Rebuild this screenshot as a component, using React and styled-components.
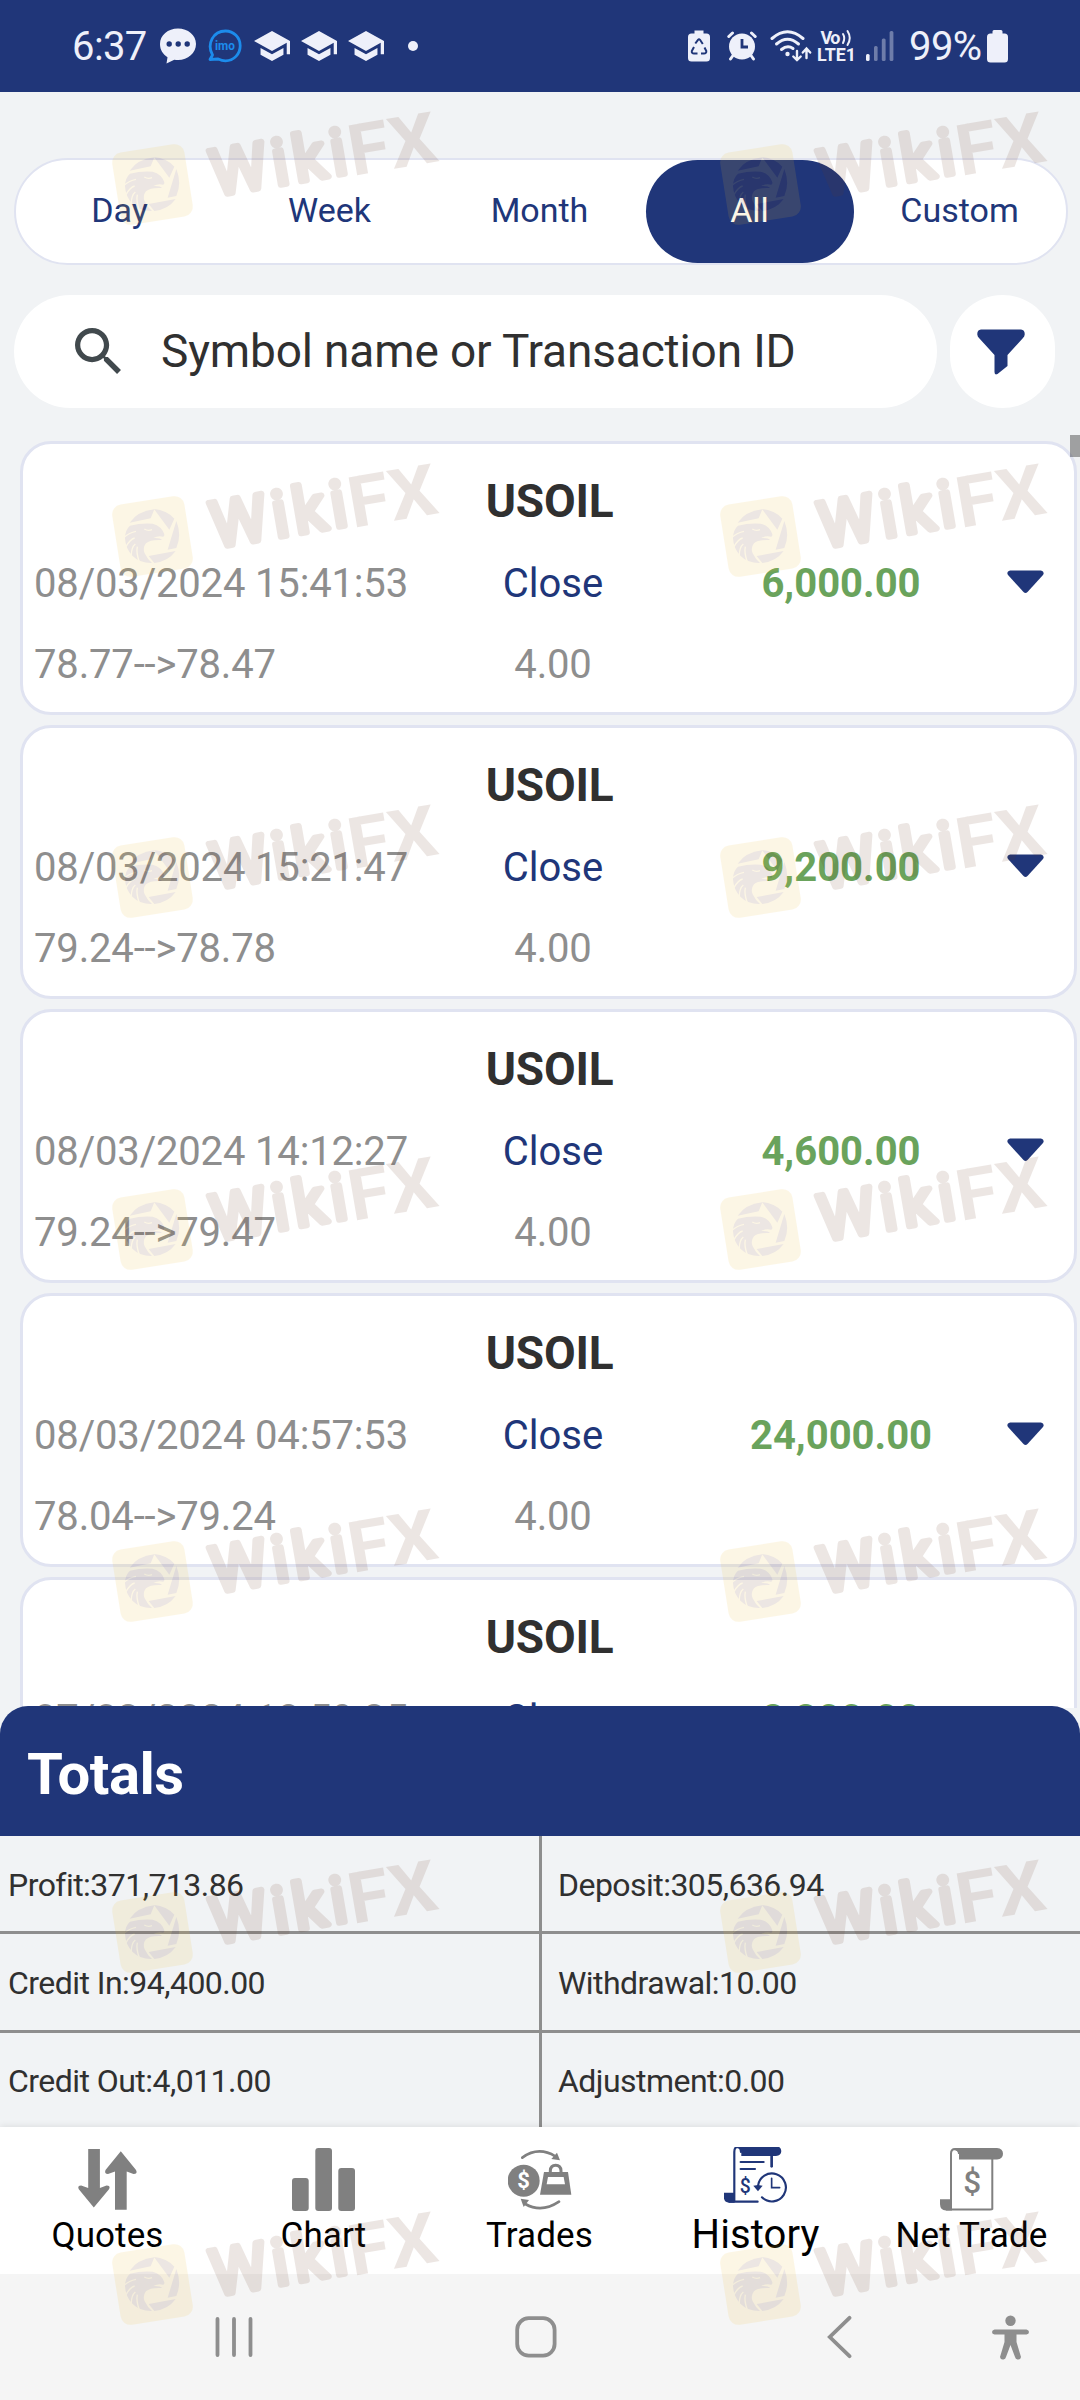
import React from 'react'
import styled, { createGlobalStyle, ThemeProvider } from 'styled-components'

const theme = {
  color: {
    primary: '#203679',
    page: '#f1f3f5',
    border: '#e0e3f1',
    text: '#303030',
    muted: '#8e8e8e',
    profit: '#6aa35c',
    icon: '#808080',
    status: '#eef0fa'
  }
}

const periods = ['Day', 'Week', 'Month', 'All', 'Custom']

const deals = [
  { id: 1, time: '08/03/2024 15:41:53', price: '78.77-->78.47', amount: '6,000.00' },
  { id: 2, time: '08/03/2024 15:21:47', price: '79.24-->78.78', amount: '9,200.00' },
  { id: 3, time: '08/03/2024 14:12:27', price: '79.24-->79.47', amount: '4,600.00' },
  { id: 4, time: '08/03/2024 04:57:53', price: '78.04-->79.24', amount: '24,000.00' },
  { id: 5, time: '07/03/2024 18:59:35', price: '78.80-->78.04', amount: '8,800.00' }
]

const totals = [
  'Profit:371,713.86',
  'Deposit:305,636.94',
  'Credit In:94,400.00',
  'Withdrawal:10.00',
  'Credit Out:4,011.00',
  'Adjustment:0.00'
]

const watermarkRows = [184.5, 536, 877.5, 1229.5, 1581, 1932.5, 2284]
const watermarkColumns = [100, 708]

/* Status bar icons */

const ChatIcon = () => (
  <svg width="36" height="36" viewBox="0 0 36 36">
    <path d="M18 0.5C28 0.5 36 7.200 36 16S28 32 18 32C16.800 32 15.500 31.900 14.300 31.700L6.500 35.500L7.500 29.200C3 26.500 0 21.800 0 16C0 7.200 8 0.500 18 0.500Z" fill="#eef0fa" />
    <g fill="#203679">
      <circle cx="9.200" cy="16" r="2.700" />
      <circle cx="18.200" cy="16" r="2.700" />
      <circle cx="27.200" cy="16" r="2.700" />
    </g>
  </svg>
)

const ImoIcon = () => (
  <svg width="34" height="34" viewBox="0 0 34 34">
    <path d="M4.500 26C-1.500 15 5 2 17.500 2C25.800 2 32.200 8.500 32.200 16.700C32.200 25 25.800 31.800 17.500 31.800C14.800 31.800 12.300 31 10.200 30L2 30.500Z" fill="none" stroke="#1c8cec" strokeWidth="2.800" strokeLinejoin="round" />
    <text x="17" y="21" textAnchor="middle" fontFamily="Roboto, sans-serif" fontWeight="700" fontSize="12.500" textLength="20" lengthAdjust="spacingAndGlyphs" fill="#1c8cec">imo</text>
  </svg>
)

const CapIcon = () => (
  <svg width="36" height="30" viewBox="1 3 22 18" preserveAspectRatio="none">
    <path d="M5 13.18v4L12 21l7-3.820v-4L12 17l-7-3.820zM12 3L1 9l11 6 9-4.910V17h2V9L12 3z" fill="#eef0fa" />
  </svg>
)

const RecycleBatteryIcon = () => (
  <svg width="22" height="32" viewBox="0 0 22 32">
    <path d="M6.500 0.500H15.500V3.500H18.500Q22 3.500 22 7V28Q22 31.500 18.500 31.500H3.500Q0 31.500 0 28V7Q0 3.500 3.500 3.500H6.500Z" fill="#eef0fa" />
    <g fill="none" stroke="#203679" strokeWidth="2">
      <path d="M7.300 13.500L10 9.800Q11 8.700 12 9.800L14.800 14" />
      <path d="M16.500 17.500L18.300 21Q18.500 23.500 16 23.500H13" />
      <path d="M9.500 23.500H6Q3.500 23.500 3.800 21L6 17" />
    </g>
  </svg>
)

const AlarmIcon = () => (
  <svg width="30" height="30" viewBox="0 0 30 30">
    <g stroke="#eef0fa" strokeWidth="3" strokeLinecap="round">
      <path d="M1.800 5.500L5.500 2" />
      <path d="M28.200 5.500L24.500 2" />
      <path d="M6 24.500L3.500 28" />
      <path d="M24 24.500L26.500 28" />
    </g>
    <circle cx="15" cy="15.500" r="13" fill="#eef0fa" />
    <path d="M15 8V16H21" fill="none" stroke="#203679" strokeWidth="2.800" />
  </svg>
)

const WifiIcon = () => (
  <svg width="42" height="32" viewBox="0 0 42 32" fill="none" stroke="#eef0fa" strokeLinecap="round">
    <g strokeWidth="3">
      <path d="M2 8.500Q17.500 -5 33 8.500" />
      <path d="M6.500 14Q17.500 4.500 28.500 14" />
      <path d="M11.500 19.500Q17.500 14.500 23 18.500" />
    </g>
    <circle cx="17.500" cy="24" r="2.200" fill="#eef0fa" stroke="none" />
    <g strokeWidth="2.400">
      <path d="M27 21V30M23.300 26.500L27 30L30.700 26.500" />
      <path d="M36.500 28V19M32.800 22.500L36.500 18.500L40.200 22.500" />
    </g>
  </svg>
)

const VolteIcon = () => (
  <svg width="38" height="34" viewBox="0 0 38 34" overflow="visible" fontFamily="Roboto, sans-serif" fontWeight="700" fill="#eef0fa">
    <text x="3.500" y="15" fontSize="18" textLength="20">Vo</text>
    <g fill="none" stroke="#eef0fa" strokeWidth="2" strokeLinecap="round">
      <path d="M26 5Q28.500 9 26 14" />
      <path d="M30.500 2Q35 9 30.500 16" />
    </g>
    <text x="0" y="32" fontSize="18.500" textLength="39" lengthAdjust="spacingAndGlyphs">LTE1</text>
  </svg>
)

const SignalIcon = () => (
  <svg width="28" height="30" viewBox="0 0 28 30" fill="#eef0fa">
    <rect x="0" y="23" width="3.600" height="7" rx="1.500" />
    <g opacity="0.380">
      <rect x="8" y="15" width="3.600" height="15" rx="1.500" />
      <rect x="15.800" y="7.500" width="3.800" height="22.500" rx="1.500" />
      <rect x="23.600" y="0" width="3.800" height="30" rx="1.500" />
    </g>
  </svg>
)

const BatteryIcon = () => (
  <svg width="21" height="33" viewBox="0 0 21 33">
    <path d="M5.500 1.500Q5.500 0 7 0H14Q15.500 0 15.500 1.500V3.500H17.500Q21 3.500 21 7V29Q21 32.500 17.500 32.500H3.500Q0 32.500 0 29V7Q0 3.500 3.500 3.500H5.500Z" fill="#eef0fa" />
  </svg>
)

/* Toolbar icons */

const SearchIcon = () => (
  <svg width="46" height="46" viewBox="3 3 17.500 17.500">
    <path d="M15.500 14h-.79l-.28-.27C15.410 12.590 16 11.110 16 9.500 16 5.910 13.090 3 9.500 3S3 5.910 3 9.500 5.910 16 9.500 16c1.610 0 3.090-.59 4.230-1.570l.27.28v.79l5 4.990L20.490 19l-4.990-5zm-6 0C7.010 14 5 11.990 5 9.500S7.010 5 9.500 5 14 7.010 14 9.500 11.990 14 9.500 14z" fill="#41494d" />
  </svg>
)

const FilterIcon = () => (
  <svg width="48" height="46" viewBox="0 0 48 46">
    <path d="M4 0.500H44Q48 1 47.700 5.500Q47.500 7.500 46 9L30.500 26V37L20.500 45Q17.500 46.500 17.500 43V26L2 9Q0.500 7.500 0.300 5.500Q0 1 4 0.500Z" fill="#203679" />
  </svg>
)

const ArrowDown = () => (
  <svg width="37" height="24" viewBox="0 0 37 24">
    <path d="M3 0.500H34Q38 1.500 36 5L20.500 22Q18.500 24 16.500 22L1 5Q-1 1.500 3 0.500Z" fill="#203679" />
  </svg>
)

/* Tab icons */

const QuotesIcon = () => (
  <svg width="64" height="64" viewBox="0 0 64 64" fill="#808080">
    <path d="M12.200 2H23.900V41L30.500 38.500Q35 38.500 33 42.300L17.800 60.500L2.800 42.300Q1 38.500 5.200 38.500L12.200 41Z" />
    <path d="M39 62.700H50.700V24.500L57.500 27Q62 27 60 23L44.800 4.300L29.500 23Q28 27 32 27L39 24.500Z" />
  </svg>
)

const ChartIcon = () => (
  <svg width="64" height="64" viewBox="0 0 64 64" fill="#808080">
    <rect x="0" y="31" width="16.700" height="33" rx="3" />
    <rect x="23.300" y="1" width="16.700" height="63" rx="3" />
    <rect x="46.300" y="21" width="16.700" height="43" rx="3" />
  </svg>
)

const TradesIcon = () => (
  <svg width="64" height="64" viewBox="0 0 64 64" fill="#808080">
    <g transform="translate(-18 -17) scale(0.3333)">
      <g fill="none" stroke="#808080" strokeWidth="8" strokeLinecap="round">
        <path d="M97 83Q145 48 196 79" />
        <path d="M207 215Q155 250 106 222" />
        <path d="M181 128V122Q182 106 197 106T213 122V128" strokeWidth="9" />
      </g>
      <path d="M201 68L210 91L184 87Z" />
      <path d="M92 206L117 210L101 231Z" />
      <circle cx="101" cy="152" r="48" />
      <path d="M162 126H234L244 194H150Z" />
      <path d="M174 141H221L225 163H170Z" fill="#fff" />
      <text x="101" y="175" textAnchor="middle" fontFamily="Roboto, sans-serif" fontWeight="700" fontSize="66" fill="#fff">$</text>
    </g>
  </svg>
)

const HistoryIcon = () => (
  <svg width="64" height="64" viewBox="0 0 64 64" fill="#203679">
    <g transform="translate(-234 -17) scale(0.3333)">
      <path d="M744 48H858Q874 50 874 63T858 78H754V66Q752 56 744 53Z" />
      <path d="M702 188H733V218H718Q702 217 702 203Z" />
      <g fill="none" stroke="#203679" strokeWidth="6.500" strokeLinecap="round">
        <path d="M733 214V66Q733 51 743 51Q753 53 753 66" />
        <path d="M718 215H803" />
        <path d="M845 78V109" strokeWidth="8" />
        <path d="M752 96H821" />
        <path d="M752 117H795" />
        <path d="M804 168A42 42 0 1 1 816 202" />
        <path d="M845 145V173H869" strokeWidth="5" />
      </g>
      <path d="M790 167L804 165L818 167L804 184Z" />
      <text x="766" y="188" textAnchor="middle" fontFamily="Roboto, sans-serif" fontWeight="500" fontSize="58">$</text>
    </g>
  </svg>
)

const NetTradeIcon = () => (
  <svg width="64" height="64" viewBox="0 0 64 64" fill="#808080">
    <path d="M15 1H57Q63 1.500 63 6.700T57 12.500H19V7Q18.500 4 15 3Z" />
    <path d="M0 52.300H12V63.500H6Q0 63 0 57Z" />
    <g fill="none" stroke="#808080" strokeWidth="2">
      <path d="M11 62V6.500Q11 2 15 2Q19 2.500 19 7" />
      <path d="M52.300 12V62Q52 62.500 50 62.500H6" />
    </g>
    <text x="32.200" y="46.300" textAnchor="middle" fontFamily="Roboto, sans-serif" fontWeight="500" fontSize="31.500">$</text>
  </svg>
)

const tabs = [
  { label: 'Quotes', Icon: QuotesIcon },
  { label: 'Chart', Icon: ChartIcon },
  { label: 'Trades', Icon: TradesIcon },
  { label: 'History', Icon: HistoryIcon, active: true },
  { label: 'Net Trade', Icon: NetTradeIcon }
]

/* Android navigation keys */

const RecentsIcon = () => (
  <svg width="38" height="44" viewBox="0 0 38 44" stroke="#8e8e8e" strokeWidth="3.800" strokeLinecap="round">
    <path d="M2.500 4V40M19 4V40M35.500 4V40" />
  </svg>
)

const HomeIcon = () => (
  <svg width="42" height="44" viewBox="0 0 42 44">
    <rect x="2.200" y="3.200" width="37.400" height="37.400" rx="11.500" fill="none" stroke="#8e8e8e" strokeWidth="3.800" />
  </svg>
)

const BackIcon = () => (
  <svg width="25" height="44" viewBox="0 0 25 44">
    <path d="M22.500 2.800L2.800 22L22.500 41.200" fill="none" stroke="#8e8e8e" strokeWidth="3.800" strokeLinecap="round" />
  </svg>
)

const AccessibilityIcon = () => (
  <svg width="37" height="46" viewBox="0 0 37 46" fill="#8e8e8e">
    <circle cx="18.500" cy="6.800" r="5.200" />
    <path d="M2.500 15.500H34.500Q37 16 37 18T34.500 20.500H24.500V28L29 43Q28.500 46 25.500 45.500Q23.500 45 23 43L18.500 31L14 43Q13.500 45 11.500 45.500Q8.500 46 8 43L12.500 28V20.500H2.500Q0 20 0 18T2.500 15.500Z" />
  </svg>
)

const Watermark = ({ x, y }) => (
  <Mark $x={x} $y={y} width="350" height="150" viewBox="0 0 350 150">
    <rect x="16" y="50" width="73" height="73" rx="10" transform="rotate(-9 52.400 86.500)" fill="#eebc2f" />
    <g transform="scale(0.3333)" fill="#693720">
      <path d="M89 218Q112 184 163 178L152 205Z" />
      <path d="M162 177Q200 180 223 206L208 239Z" />
      <path d="M229 213Q246 255 229 294L203 299Z" />
      <path d="M227 303Q205 334 163 339L146 318Z" />
      <path d="M75 265Q75 240 90 227Q125 218 158 221Q185 228 193 253Q194 260 189 260Q175 256 160 264Q182 263 186 270Q150 268 138 280Q127 294 134 310Q142 327 156 339Q120 340 98 318Q77 298 75 265Z" />
      <g fill="none" stroke="#eebc2f" strokeWidth="4">
        <path d="M72 262Q88 248 108 244" />
        <path d="M78 290Q90 268 104 264" />
        <path d="M94 316Q94 292 106 282" />
        <path d="M118 336Q108 308 112 290" />
        <path d="M133 237Q144 244 156 239" />
      </g>
    </g>
    <g fill="#693720">
      <text transform="translate(114.500 98) rotate(-9.700)" fontFamily="Roboto, sans-serif" fontSize="64" textLength="137" stroke="#693720" strokeWidth="6" strokeLinejoin="round">Wiki</text>
      <text transform="translate(252.500 78) rotate(-9.700)" fontFamily="Roboto, sans-serif" fontWeight="700" fontSize="71" textLength="89" lengthAdjust="spacingAndGlyphs">FX</text>
    </g>
  </Mark>
)

const DealCard = ({ deal }) => (
  <Card>
    <Symbol>USOIL</Symbol>
    <CardRow>
      <Muted>{deal.time}</Muted>
      <Action>Close</Action>
      <Amount>{deal.amount}</Amount>
      <Expand><ArrowDown /></Expand>
    </CardRow>
    <CardRow>
      <Muted>{deal.price}</Muted>
      <Volume>4.00</Volume>
    </CardRow>
  </Card>
)

const App = () => {
  return (
    <ThemeProvider theme={theme}>
      <GlobalStyle />
      <Screen>
        <StatusBar>
          <Clock>6:37</Clock>
          <Notifications>
            <ChatIcon />
            <ImoIcon />
            <CapIcon />
            <CapIcon />
            <CapIcon />
          </Notifications>
          <MoreDot />
          <Indicators>
            <RecycleBatteryIcon />
            <AlarmIcon />
            <WifiIcon />
            <VolteIcon />
            <SignalIcon />
          </Indicators>
          <Percent>99%</Percent>
          <BatteryIcon />
        </StatusBar>

        <Periods>
          {periods.map(period => (
            <Period key={period} $active={period === 'All'}>{period}</Period>
          ))}
        </Periods>

        <Toolbar>
          <SearchBox>
            <SearchIcon />
            <Placeholder>Symbol name or Transaction ID</Placeholder>
          </SearchBox>
          <FilterButton><FilterIcon /></FilterButton>
        </Toolbar>

        <List>
          {deals.map(deal => (
            <DealCard key={deal.id} deal={deal} />
          ))}
          <ScrollThumb />
        </List>

        <TotalsHeader>Totals</TotalsHeader>
        <TotalsGrid>
          {totals.map(total => (
            <Total key={total}>{total}</Total>
          ))}
        </TotalsGrid>

        <TabBar>
          {tabs.map(({ label, Icon, active }) => (
            <Tab key={label}>
              <Icon />
              <TabLabel $active={active}>{label}</TabLabel>
            </Tab>
          ))}
        </TabBar>

        <SystemBar>
          <RecentsIcon />
          <HomeIcon />
          <BackIcon />
          <AccessibilityIcon />
        </SystemBar>

        {watermarkRows.map(y =>
          watermarkColumns.map(x => <Watermark key={`${x}-${y}`} x={x} y={y} />)
        )}
      </Screen>
    </ThemeProvider>
  )
}

const GlobalStyle = createGlobalStyle`
  * {
    box-sizing: border-box;
  }
  body {
    margin: 0;
    font-family: Roboto, sans-serif;
    background: #f1f3f5;
  }
  svg {
    display: block;
    flex-shrink: 0;
  }
`

const Screen = styled.div`
  position: relative;
  display: flex;
  flex-direction: column;
  width: 1080px;
  height: 2400px;
  overflow: hidden;
  background: ${({ theme }) => theme.color.page};
  white-space: nowrap;
`

const StatusBar = styled.header`
  display: flex;
  align-items: center;
  flex-shrink: 0;
  height: 92px;
  padding: 0 72px 0 72px;
  background: ${({ theme }) => theme.color.primary};
  color: ${({ theme }) => theme.color.status};
`

const Clock = styled.div`
  width: 88px;
  font-size: 40px;
  letter-spacing: -0.6px;
`

const Notifications = styled.div`
  display: flex;
  align-items: center;
  gap: 12px;

  svg:nth-child(n + 4) {
    margin-left: -1px;
  }
`

const MoreDot = styled.div`
  width: 10px;
  height: 10px;
  margin-left: 24px;
  border-radius: 50%;
  background: ${({ theme }) => theme.color.status};
`

const Indicators = styled.div`
  display: flex;
  align-items: center;
  gap: 11px;
  margin-left: auto;
  padding-right: 15px;

  svg:first-child {
    margin-right: 6px;
  }
  svg:nth-child(3) {
    margin: 0 -6px 0 2px;
  }
`

const Percent = styled.div`
  width: 78px;
  font-size: 40px;
  letter-spacing: -0.6px;
`

const Periods = styled.nav`
  display: grid;
  grid-template-columns: repeat(5, 208px);
  gap: 2px;
  flex-shrink: 0;
  width: 1054px;
  height: 107px;
  margin: 66px 0 0 14px;
  border: 2px solid ${({ theme }) => theme.color.border};
  border-radius: 54px;
  background: #fff;
`

const Period = styled.div`
  display: flex;
  align-items: center;
  justify-content: center;
  padding: 0 1px 3px 0;
  border-radius: 52px;
  font-size: 34px;
  background: ${({ theme, $active }) => ($active ? theme.color.primary : 'transparent')};
  color: ${({ theme, $active }) => ($active ? '#fff' : theme.color.primary)};
`

const Toolbar = styled.div`
  display: flex;
  gap: 13px;
  flex-shrink: 0;
  height: 113px;
  margin: 30px 25px 0 14px;
`

const SearchBox = styled.div`
  flex: 1;
  display: flex;
  align-items: center;
  padding: 0 0 2px 61px;
  border-radius: 57px;
  background: #fff;
`

const Placeholder = styled.div`
  margin-left: 40px;
  font-size: 46px;
  letter-spacing: -0.14px;
  color: ${({ theme }) => theme.color.text};
`

const FilterButton = styled.div`
  display: flex;
  align-items: center;
  justify-content: center;
  width: 105px;
  padding-right: 3px;
  border-radius: 53px;
  background: #fff;
`

const List = styled.main`
  position: relative;
  display: flex;
  flex-direction: column;
  gap: 10px;
  flex-shrink: 0;
  height: 1273px;
  padding: 6px 3px 0 20px;
  margin-top: 27px;
  overflow: hidden;
`

const ScrollThumb = styled.div`
  position: absolute;
  top: 0;
  right: 0;
  width: 10px;
  height: 22px;
  background: rgba(0, 0, 0, 0.34);
`

const Card = styled.div`
  flex-shrink: 0;
  height: 274px;
  padding: 16px 9px 0 11px;
  border: 3px solid ${({ theme }) => theme.color.border};
  border-radius: 31px;
  background: #fff;
  font-size: 40px;
`

const Symbol = styled.div`
  line-height: 82px;
  font-size: 46px;
  font-weight: 700;
  letter-spacing: -0.2px;
  text-align: center;
  color: ${({ theme }) => theme.color.text};
`

const CardRow = styled.div`
  display: grid;
  grid-template-columns: 375px 288px 288px 80px;
  line-height: 84px;

  & + & {
    line-height: 78px;
  }
`

const Muted = styled.div`
  letter-spacing: -0.16px;
  color: ${({ theme }) => theme.color.muted};
`

const Volume = styled(Muted)`
  text-align: center;
`

const Action = styled.div`
  text-align: center;
  color: ${({ theme }) => theme.color.primary};
`

const Amount = styled.div`
  font-weight: 700;
  text-align: center;
  color: ${({ theme }) => theme.color.profit};
`

const Expand = styled.div`
  display: flex;
  justify-content: center;
  padding-top: 28px;
`

const TotalsHeader = styled.div`
  z-index: 1;
  flex-shrink: 0;
  height: 130px;
  margin-top: -2px;
  padding-left: 27px;
  border-radius: 28px 28px 0 0;
  background: ${({ theme }) => theme.color.primary};
  color: #fff;
  font-size: 58px;
  font-weight: 700;
  letter-spacing: -0.5px;
  line-height: 136px;
`

const TotalsGrid = styled.div`
  display: grid;
  grid-template-columns: 542px 538px;
  grid-template-rows: 98px 99px 94px;
  flex-shrink: 0;
  color: ${({ theme }) => theme.color.text};
`

const Total = styled.div`
  display: flex;
  align-items: center;
  padding: 2px 0 0 8px;
  border-bottom: 3px solid ${({ theme }) => theme.color.muted};
  font-size: 32px;
  letter-spacing: -0.54px;

  &:nth-child(odd) {
    border-right: 3px solid ${({ theme }) => theme.color.muted};
  }
  &:nth-child(even) {
    padding-left: 16px;
  }
  &:nth-last-child(-n + 2) {
    border-bottom: 0;
  }
`

const TabBar = styled.nav`
  display: grid;
  grid-template-columns: repeat(5, 1fr);
  flex-shrink: 0;
  height: 147px;
  background: #fff;
  box-shadow: 0 -1px 7px rgba(0, 0, 0, 0.09);
`

const Tab = styled.div`
  display: flex;
  flex-direction: column;
  align-items: center;
  padding-top: 20px;
`

const TabLabel = styled.div`
  margin-top: 4px;
  padding-right: 1px;
  font-size: ${({ $active }) => ($active ? '40px' : '35px')};
  line-height: ${({ $active }) => ($active ? '39px' : '42px')};
  letter-spacing: 0.1px;
  color: #000;
`

const SystemBar = styled.footer`
  z-index: 1;
  display: flex;
  align-items: center;
  flex: 1;
  padding-left: 215px;
  background: #f5f5f5;

  svg:nth-child(2) {
    margin-left: 262px;
  }
  svg:nth-child(3) {
    margin-left: 270px;
  }
  svg:nth-child(4) {
    margin-left: 140px;
  }
`

const Mark = styled.svg`
  position: absolute;
  z-index: 2;
  left: ${({ $x }) => $x}px;
  top: ${({ $y }) => $y - 86.5}px;
  opacity: 0.12;
  pointer-events: none;
`

export default App
